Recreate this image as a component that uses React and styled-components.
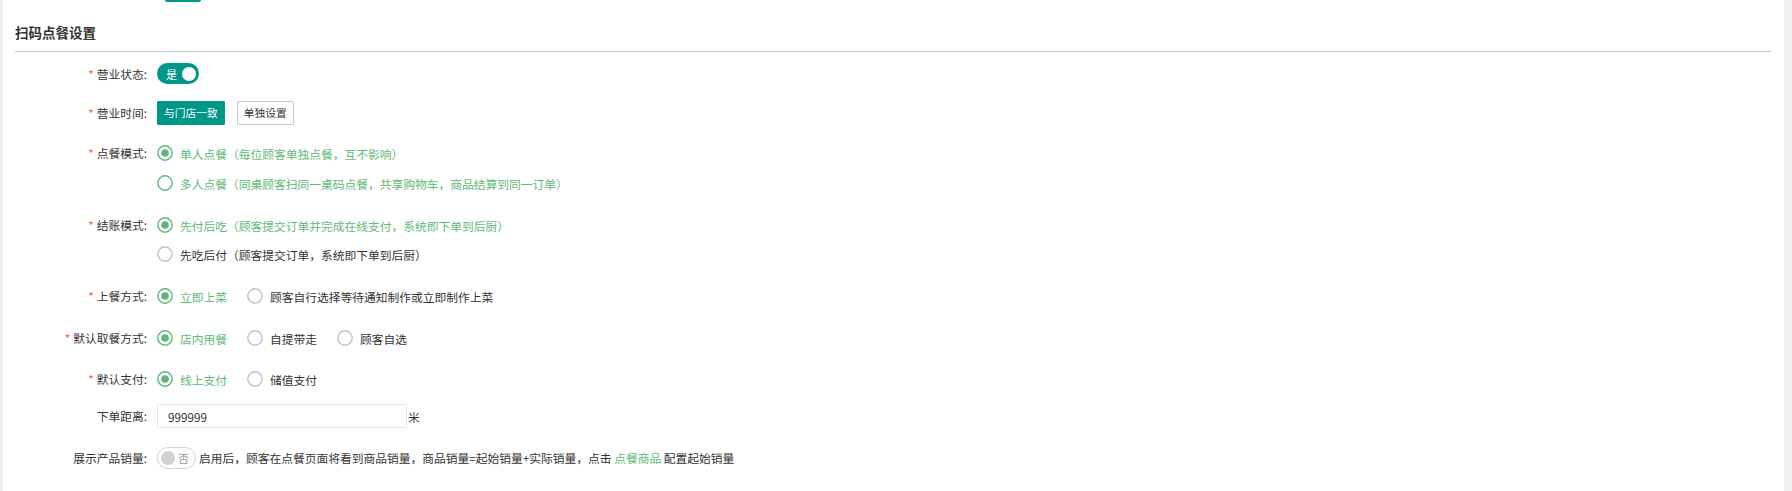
import styled, { createGlobalStyle } from "styled-components"

const GlobalStyle = createGlobalStyle`
    html, body {
        margin: 0;
        padding: 0;
        height: 100%;
    }
    body {
        font-family: "Noto Sans CJK SC", "Liberation Sans", sans-serif;
        font-size: 11.75px;
        color: #333333;
    }
`

const TEAL = "#009688"
const GREEN = "#5FB878"

const Page = styled.div`
    display: flex;
    min-height: 100vh;
    padding: 0 8px 0 3px;
    background-color: #f0f0f0;
`

const Panel = styled.div`
    flex: 1;
    padding: 0 13px 0 12px;
    background-color: #ffffff;
`

const TopStub = styled.div`
    width: 36px;
    height: 2px;
    margin-left: 150px;
    background-color: ${TEAL};
    border-radius: 0 0 2px 2px;
`

const Title = styled.div`
    padding: 20px 0 9px;
    font-size: 13.5px;
    font-weight: bold;
    line-height: 20px;
    color: #333333;
    border-bottom: 1px solid #c9c9c9;
`

const Row = styled.div`
    display: flex;
    align-items: flex-start;
    margin-top: ${props => props.$top}px;
`

const Label = styled.div`
    width: 132px;
    flex-shrink: 0;
    text-align: right;
    line-height: ${props => props.$h}px;
    white-space: nowrap;
`

const Star = styled.span`
    color: #FF5722;
    margin-right: 3px;
`

const Content = styled.div`
    margin-left: 10px;
    display: flex;
    gap: ${props => props.$gap || 0}px;
    align-items: center;
`

const Switch = styled.div`
    display: flex;
    align-items: center;
    justify-content: space-between;
    box-sizing: border-box;
    width: ${props => props.$on ? 42 : 39}px;
    height: ${props => props.$on ? 21 : 22}px;
    padding: ${props => props.$on ? "0 3px 0 9px" : "0 6px 0 3px"};
    border-radius: 12px;
    border: ${props => props.$on ? "none" : "1px solid #d2d2d2"};
    background-color: ${props => props.$on ? TEAL : "#ffffff"};
    flex-direction: ${props => props.$on ? "row" : "row-reverse"};
    font-size: 11px;
    line-height: 12px;
    color: ${props => props.$on ? "#ffffff" : "#999999"};
`

const Knob = styled.span`
    width: 14px;
    height: 14px;
    border-radius: 50%;
    background-color: ${props => props.$on ? "#ffffff" : "#d2d2d2"};
`

const Button = styled.button`
    height: 24px;
    padding: 0 6px;
    font-family: inherit;
    font-size: 10.75px;
    line-height: 22px;
    border-radius: 1px;
    cursor: pointer;
    border: 1px solid ${props => props.$primary ? TEAL : "#c9c9c9"};
    background-color: ${props => props.$primary ? TEAL : "#ffffff"};
    color: ${props => props.$primary ? "#ffffff" : "#333333"};
`

const Options = styled.div`
    display: flex;
    flex-direction: column;
    gap: ${props => props.$gap}px;
`

const Line = styled.div`
    display: flex;
    align-items: center;
`

const Option = styled.label`
    display: flex;
    align-items: center;
    height: 20px;
    margin-right: 20px;
    color: ${props => props.$green ? GREEN : "#333333"};
    white-space: nowrap;
    cursor: pointer;

    svg {
        flex-shrink: 0;
        margin-right: 7px;
    }
`

const Input = styled.input`
    box-sizing: border-box;
    width: 250px;
    height: 24px;
    padding: 0 10px;
    border: 1px solid #e6e6e6;
    border-radius: 1px;
    font-family: inherit;
    font-size: 11.75px;
    color: #333333;
    outline: none;
`

const Unit = styled.span`
    margin-left: 1px;
`

const Hint = styled.span`
    margin-left: 3px;
    line-height: 22px;
    white-space: nowrap;
`

const Link = styled.a`
    color: ${GREEN};
    text-decoration: none;
    cursor: pointer;
`

function RadioIcon({ checked, color }) {
    return (
        <svg width="16" height="16" viewBox="0 0 16 16">
            <circle cx="8" cy="8" r="7.2" fill="none" stroke={color} strokeWidth="1.4" />
            {checked && <circle cx="8" cy="8" r="3.8" fill={color} />}
        </svg>
    )
}

function Radio({ text, checked, green }) {
    const color = checked || green ? GREEN : "#c2c2c2"
    return (
        <Option $green={checked || green}>
            <RadioIcon checked={checked} color={color} />
            {text}
        </Option>
    )
}

function FieldLabel({ text, required, h }) {
    return (
        <Label $h={h}>
            {required && <Star>*</Star>}
            {text}:
        </Label>
    )
}

export default function App() {
    return (
        <>
            <GlobalStyle />
            <Page>
                <Panel>
                    <TopStub />
                    <Title>扫码点餐设置</Title>

                    <Row $top={11}>
                        <FieldLabel text="营业状态" required h={21} />
                        <Content>
                            <Switch $on>
                                是
                                <Knob $on />
                            </Switch>
                        </Content>
                    </Row>

                    <Row $top={17}>
                        <FieldLabel text="营业时间" required h={24} />
                        <Content $gap={12}>
                            <Button $primary>与门店一致</Button>
                            <Button>单独设置</Button>
                        </Content>
                    </Row>

                    <Row $top={18}>
                        <FieldLabel text="点餐模式" required h={20} />
                        <Content>
                            <Options $gap={10}>
                                <Radio checked text="单人点餐（每位顾客单独点餐，互不影响）" />
                                <Radio green text="多人点餐（同桌顾客扫同一桌码点餐，共享购物车，商品结算到同一订单）" />
                            </Options>
                        </Content>
                    </Row>

                    <Row $top={22}>
                        <FieldLabel text="结账模式" required h={20} />
                        <Content>
                            <Options $gap={9}>
                                <Radio checked text="先付后吃（顾客提交订单并完成在线支付，系统即下单到后厨）" />
                                <Radio text="先吃后付（顾客提交订单，系统即下单到后厨）" />
                            </Options>
                        </Content>
                    </Row>

                    <Row $top={22}>
                        <FieldLabel text="上餐方式" required h={20} />
                        <Content>
                            <Line>
                                <Radio checked text="立即上菜" />
                                <Radio text="顾客自行选择等待通知制作或立即制作上菜" />
                            </Line>
                        </Content>
                    </Row>

                    <Row $top={22}>
                        <FieldLabel text="默认取餐方式" required h={20} />
                        <Content>
                            <Line>
                                <Radio checked text="店内用餐" />
                                <Radio text="自提带走" />
                                <Radio text="顾客自选" />
                            </Line>
                        </Content>
                    </Row>

                    <Row $top={21}>
                        <FieldLabel text="默认支付" required h={20} />
                        <Content>
                            <Line>
                                <Radio checked text="线上支付" />
                                <Radio text="储值支付" />
                            </Line>
                        </Content>
                    </Row>

                    <Row $top={15}>
                        <FieldLabel text="下单距离" h={24} />
                        <Content>
                            <Input defaultValue="999999" />
                            <Unit>米</Unit>
                        </Content>
                    </Row>

                    <Row $top={19}>
                        <FieldLabel text="展示产品销量" h={22} />
                        <Content>
                            <Switch>
                                否
                                <Knob />
                            </Switch>
                            <Hint>
                                启用后，顾客在点餐页面将看到商品销量，商品销量=起始销量+实际销量，点击 <Link>点餐商品</Link> 配置起始销量
                            </Hint>
                        </Content>
                    </Row>
                </Panel>
            </Page>
        </>
    )
}
